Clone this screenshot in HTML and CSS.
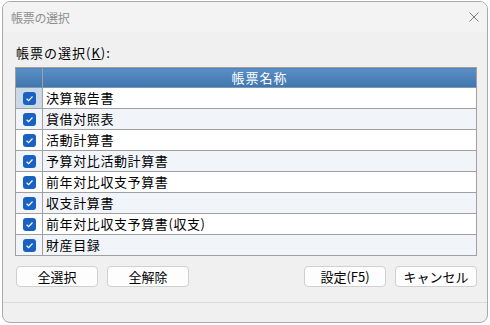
FILE: index.html
```html
<!DOCTYPE html>
<html lang="ja">
<head>
  <meta charset="UTF-8">
  <title>帳票の選択</title>
  <link rel="stylesheet" href="styles.css">
</head>
<body>
  <div class="window">
    <div class="titlebar">
      <span class="title">帳票の選択</span>
      <svg class="close" width="10" height="10" viewBox="0 0 10 10">
        <path d="M0.5 0.5 L9.5 9.5 M9.5 0.5 L0.5 9.5" stroke="#7c7c7c" stroke-width="1" fill="none"/>
      </svg>
    </div>
    <div class="content">
      <div class="label">帳票の選択(<u>K</u>):</div>
      <table class="grid">
        <thead>
          <tr><th class="chk"></th><th>帳票名称</th></tr>
        </thead>
        <tbody id="rows">
          <!-- rows are filled from reportList -->
        </tbody>
      </table>
      <div class="buttons">
        <div class="group">
          <button class="btn">全選択</button>
          <button class="btn">全解除</button>
        </div>
        <div class="group">
          <button class="btn">設定(F5)</button>
          <button class="btn">キャンセル</button>
        </div>
      </div>
    </div>
    <div class="footer"></div>
  </div>
  <script>
    // report names shown in the grid
    const reportList = [
      "決算報告書",
      "貸借対照表",
      "活動計算書",
      "予算対比活動計算書",
      "前年対比収支予算書",
      "収支計算書",
      "前年対比収支予算書(収支)",
      "財産目録"
    ];

    const checkIcon = `
      <svg width="13" height="13" viewBox="0 0 13 13">
        <rect x="0" y="0" width="13" height="13" rx="3" fill="#1a62c1"/>
        <path d="M3.6 6.7 L5.6 8.6 L9.5 4.5" stroke="#fff" stroke-width="1.2" fill="none"/>
      </svg>`;

    const rowsEl = document.getElementById("rows");
    reportList.forEach((name, i) => {
      const tr = document.createElement("tr");
      tr.innerHTML = `<td class="chk${i === 0 ? " current" : ""}">${checkIcon}</td><td class="name">${name}</td>`;
      rowsEl.appendChild(tr);
    });
  </script>
</body>
</html>
```
FILE: styles.css
```css
body {
  margin: 0;
  background-color: #ffffff;
  font-family: "Noto Sans CJK JP", "Noto Sans", sans-serif;
}
.window {
  margin: 1px 0 0 2px;
  width: 484px;
  height: 320px;
  border: 1px solid #a9a9a9;
  border-radius: 8px;
  background-color: #f0f0f0;
  overflow: hidden;
  display: flex;
  flex-direction: column;
}
.titlebar {
  height: 30px;
  background-color: #f3f3f3;
  display: flex;
  align-items: center;
  justify-content: space-between;
  padding: 0 8px 0 8px;
}
.title {
  font-size: 12px;
  color: #8e8e8e;
  letter-spacing: -0.3px;
}
.content {
  flex: 1;
  padding: 13px 9px 0 12px;
}
.label {
  font-size: 13px;
  line-height: 16px;
  padding-left: 1px;
  letter-spacing: 1px;
  color: #000;
}
.grid {
  margin-top: 6px;
  width: 462px;
  border-collapse: collapse;
  border: 1px solid #a0a0a0;
  font-size: 13px;
}
.grid th {
  height: 19px;
  padding: 0;
  font-weight: normal;
  color: #fff;
  letter-spacing: 1px;
  background: linear-gradient(#5b8fc5, #3f76ad);
  border: 1px solid #a0a0a0;
  border-bottom-color: #7e98b4;
}
.grid td {
  height: 20px;
  padding: 0;
  border: 1px solid #a0a0a0;
  line-height: 16px;
}
.grid tbody tr:nth-child(even) td {
  background-color: #f1f5fa;
}
.grid tbody tr:nth-child(odd) td {
  background-color: #ffffff;
}
.grid .chk {
  width: 26px;
  text-align: center;
}
.grid td.chk svg {
  display: block;
  margin: 0 auto;
}
.grid tbody tr td.current {
  background-color: #cbd8e6;
}
.grid .name {
  padding-left: 3px;
  letter-spacing: 0.6px;
  color: #000;
}
.buttons {
  margin-top: 10px;
  display: flex;
  justify-content: space-between;
  width: 462px;
}
.group {
  display: flex;
  gap: 9px;
  padding-left: 1px;
}
.btn {
  width: 82px;
  height: 21px;
  padding: 0;
  background-color: #fdfdfd;
  border: 1px solid #d0d0d0;
  border-radius: 4px;
  font-family: "Noto Sans CJK JP", sans-serif;
  font-size: 13px;
  line-height: 17px;
  color: #000;
}
.footer {
  height: 19px;
  border-top: 1px solid #dcdcdc;
}
```
